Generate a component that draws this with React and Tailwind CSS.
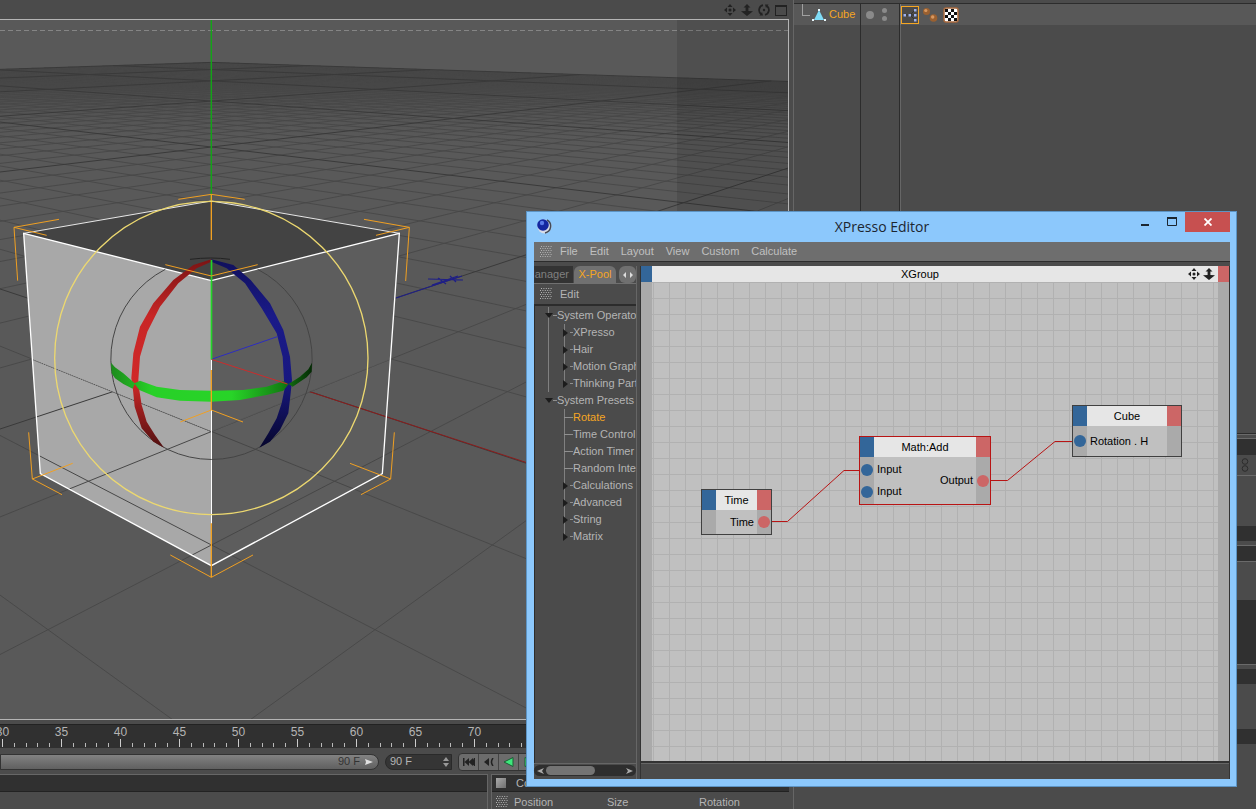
const MENUS = ['File', 'Edit', 'Layout', 'View', 'Custom', 'Calculate'];

const TREE = [
  { label: 'System Operators', items: [
    { label: 'XPresso', folder: true },
    { label: 'Hair', folder: true },
    { label: 'Motion Graphics', folder: true },
    { label: 'Thinking Particles', folder: true },
  ] },
  { label: 'System Presets', items: [
    { label: 'Rotate', active: true },
    { label: 'Time Control' },
    { label: 'Action Timer' },
    { label: 'Random Integer' },
    { label: 'Calculations', folder: true },
    { label: 'Advanced', folder: true },
    { label: 'String', folder: true },
    { label: 'Matrix', folder: true },
  ] },
];

const FRAMES = [30, 35, 40, 45, 50, 55, 60, 65, 70, 75, 80, 85, 90];

// floor plane projection, one unit = one grid cell
const CELL = 0.0902;
const HALF = 50;
const project = (x, z) => {
  const s = (x + z) * CELL;
  const w = 1 + (z - x) * CELL;
  return [(211.5 + (995 * s) / w).toFixed(1), (29.5 + 329.5 / w).toFixed(1)];
};

const gridPath = (major) => {
  let d = '';
  for (let k = -HALF; k <= HALF; k++) {
    if ((k % 10 === 0) !== major) continue;
    const nearX = Math.min(HALF, k + 10.3);
    const nearZ = Math.max(-HALF, k - 10.3);
    if (nearX > -HALF) d += `M${project(-HALF, k)}L${project(nearX, k)}`;
    if (nearZ < HALF) d += `M${project(k, nearZ)}L${project(k, HALF)}`;
  }
  return d;
};

const MINOR = gridPath(false);
const MAJOR = gridPath(true);

const MoveIcon = ({ className }) => (
  <svg viewBox="0 0 12 12" className={className} fill="currentColor">
    <path d="M6 0L8.5 3H3.5zM6 12L8.5 9H3.5zM0 6L3 3.5V8.5zM12 6L9 3.5V8.5z" />
    <circle cx="6" cy="6" r="1.5" />
  </svg>
);

const ZoomIcon = ({ className }) => (
  <svg viewBox="0 0 12 12" className={className} fill="currentColor">
    <path d="M6 0L9.5 3.5H7.4V7L12 7.2L6 12L0 7.2L4.6 7V3.5H2.5z" />
  </svg>
);

const OrbitIcon = ({ className }) => (
  <svg viewBox="0 0 12 12" className={className} fill="none" stroke="currentColor" strokeWidth="1.7">
    <path d="M5 1.2A5 5 0 0 0 3 10M7 10.800A5 5 0 0 0 9 2" />
    <path d="M1.500 11.500L5 11.500L4 8zM10.500 .5L7 .5L8 4z" fill="currentColor" stroke="none" />
    <circle cx="6" cy="6" r="1.2" fill="currentColor" stroke="none" />
  </svg>
);

const FrameIcon = ({ className }) => (
  <svg viewBox="0 0 12 12" className={className}>
    <rect x=".5" y="1.5" width="11" height="10" fill="none" stroke="currentColor" />
    <path d="M0 1H12V3H0z" fill="currentColor" />
  </svg>
);

const Grip = () => (
  <svg viewBox="0 0 12 12" className="h-3 w-3 flex-none">
    {[0, 1, 2, 3, 4, 5].map(row => (
      <path key={row} d={`M${row % 2 ? 0 : 1} ${row * 2 + 0.5}H12`} stroke="#b4b4b4" strokeDasharray="1 1.4" />
    ))}
  </svg>
);

function Viewport() {
  return (
    <svg viewBox="0 20 788 699" preserveAspectRatio="xMinYMin slice" className="block h-full w-full" role="img" aria-label="Perspective view">
      <defs>
        <clipPath id="front">
          <path d="M31 359L211.5 431.5L391 359L382 474L211.5 565.5L40 474z" />
        </clipPath>
        <linearGradient id="haze" x1="0" y1="62" x2="0" y2="150" gradientUnits="userSpaceOnUse">
          <stop offset="0" stopColor="#414141" />
          <stop offset=".2" stopColor="#454545" />
          <stop offset="1" stopColor="#595959" stopOpacity="0" />
        </linearGradient>
        <linearGradient id="redBand" x1="0" y1="240" x2="0" y2="803" gradientUnits="userSpaceOnUse">
          <stop offset="0" stopColor="#7c1414" />
          <stop offset=".3" stopColor="#c82626" />
          <stop offset=".65" stopColor="#d02828" />
          <stop offset="1" stopColor="#501010" />
        </linearGradient>
        <linearGradient id="blueBand" x1="0" y1="240" x2="0" y2="803" gradientUnits="userSpaceOnUse">
          <stop offset="0" stopColor="#10105c" />
          <stop offset=".3" stopColor="#1a1a88" />
          <stop offset=".65" stopColor="#181880" />
          <stop offset="1" stopColor="#06062c" />
        </linearGradient>
        <linearGradient id="greenBand" x1="333" y1="0" x2="936" y2="0" gradientUnits="userSpaceOnUse">
          <stop offset="0" stopColor="#1c8a1c" />
          <stop offset=".2" stopColor="#28d028" />
          <stop offset=".6" stopColor="#28d428" />
          <stop offset=".85" stopColor="#138013" />
          <stop offset="1" stopColor="#042a04" />
        </linearGradient>
      </defs>
      <rect y="20" width="788" height="699" fill="#595959" />

      {/* floor */}
      <path d="M211.500 62.500L788 82V150H0V70z" fill="url(#haze)" />
      <g fill="none">
        <path d={MINOR} stroke="#474747" strokeWidth=".9" />
        <path d={MAJOR} stroke="#3a3a3a" />
      </g>
      <path d="M0 30.500H788" stroke="#858585" strokeDasharray="5 3" />
      <path d="M210.600 20H212V201H210.600z" fill="#12a418" />
      <path d="M309 391.500L788 548" stroke="#8c1c1c" />
      <path d="M396 298L462 276M428 279L463 280M432 285L458 276M438 278L446 284M450 276L456 282" stroke="#1f1f86" strokeWidth="1.2" />

      {/* cube faces */}
      <g transform="translate(0 180) scale(.33333)">
        <path d="M71 160L634 63L1198 160L634 302z" fill="#434343" />
        <path d="M71 160L634 302V1157L121 881z" fill="#a8a8a8" />
        <path d="M1198 160L634 302V1157L1147 881z" fill="#5d5d5d" />
      </g>
      <g clipPath="url(#front)" fill="none">
        <path d={MINOR} stroke="#474747" />
        <path d={MAJOR} stroke="#3a3a3a" />
        <path d="M309 391.500L788 548" stroke="#8c1c1c" />
      </g>
      <path d="M31 359L211 431.500L391 359" fill="none" stroke="#555" strokeDasharray="1 1" />

      {/* edges, rotation gizmo and selection brackets */}
      <g transform="translate(0 180) scale(.33333)" fill="none" strokeWidth="3">
        <path d="M71 160L634 63L1198 160" stroke="#e8e8e8" />
        <path d="M71 160L634 302L1198 160L1147 881L634 1157L121 881z" stroke="#fff" strokeWidth="4" />
        <path d="M633 302H636V1157H633z" fill="#fff" />
        <path d="M496 268A302 302 0 1 0 773 268" stroke="#444" />
        <path d="M570 238Q634 230 690 238" stroke="#222" />
        <path
          fill="url(#redBand)"
          d="M634 238L580 255L520 300L460 370L420 440L400 520L394 595L398 620L404 680L425 745L460 785L492 803L465 765L440 725L425 675L417 625L415 600L420 530L442 455L480 380L535 310L590 265L634 245z"
        />
        <path
          fill="url(#blueBand)"
          d="M634 238L700 255L752 300L810 370L850 450L870 530L876 600L872 640L865 700L840 750L810 785L778 803L805 760L830 715L845 670L853 630L852 600L848 530L830 460L785 385L735 310L680 265L634 245z"
        />
        <path
          fill="url(#greenBand)"
          d="M333 548L345 562L370 580L404 610L420 602L470 620L540 630L634 632L730 630L800 620L850 604L866 612L900 590L925 568L936 548L935 575L920 592L900 605L878 620L866 612L850 632L800 645L720 660L634 665L540 662L470 652L418 630L404 612L398 626L370 612L345 595L335 580z"
        />
        <path d="M634 538L832 470" stroke="#2c2cc0" />
        <path d="M634 538L862 612" stroke="#cc2c2c" />
        <path d="M632 240H637V538H632z" fill="#22d428" />
        <path
          stroke="#f0a022"
          strokeWidth="4"
          d="M634 43V180M634 570V690M634 1030V1192"
        />
        <path
          stroke="#f0a022"
          d="M177 118L42 142L53 302M42 142L140 166M1092 118L1228 142L1217 303M1228 142L1128 166M535 58L634 43L734 58M496 254L634 288L773 254M541 726L634 690L729 726M86 757L97 897L186 944M97 897L218 850M1183 757L1172 897L1083 944M1172 897L1050 850M511 1125L634 1192L759 1125"
        />
        <circle cx="634" cy="534" r="470" stroke="#ecd870" strokeWidth="4" />
      </g>
      <rect x="677" y="20" width="111" height="699" fill="#000" opacity=".1" />
    </svg>
  );
}

function Timeline() {
  return (
    <div className="flex h-6 flex-none overflow-hidden border-t border-[#222] bg-[#303030]">
      <div className="-ml-[27px] flex flex-none">
        {FRAMES.map(frame => (
          <div key={frame} className="w-[59px] flex-none text-center text-xs leading-[14px]">
            <div>{frame}</div>
            <div className="flex h-2 items-end">
              {[-2, -1, 0, 1, 2].map(t => (
                <div key={t} className="flex flex-1 justify-center">
                  <span className={t === 0 ? 'h-2 w-px bg-[#ccc]' : 'h-1 w-px bg-[#bbb]'} />
                </div>
              ))}
            </div>
          </div>
        ))}
      </div>
    </div>
  );
}

function Transport() {
  return (
    <div className="flex h-[21px] flex-none items-center pb-1">
      <div className="flex h-4 w-[379px] flex-none items-center justify-end gap-1 rounded-r-full border border-[#333] bg-linear-to-b from-[#828282] to-[#606060] pr-1 text-[11px] text-[#333]">
        <span>90 F</span>
        <svg viewBox="0 0 10 10" className="h-2.5 w-2.5"><path d="M1 2L9 5L1 8L2 5z" fill="#e0e0e0" /></svg>
      </div>
      <label className="ml-1.5 flex h-4 w-[67px] flex-none items-center rounded-l-full border border-[#2a2a2a] bg-[#353535] pl-1">
        <input aria-label="End frame" defaultValue="90 F" className="w-0 flex-1 bg-transparent text-[11px] text-[#b4b4b4] outline-none" />
        <svg viewBox="0 0 6 10" className="mr-0.5 h-2.5 w-1.5"><path d="M3 0L6 4H0zM3 10L6 6H0z" fill="#999" /></svg>
      </label>
      <div className="ml-1.5 flex h-[18px] flex-none overflow-hidden rounded-l-sm border border-[#333] bg-[#6c6c6c] text-[#222]">
        <button aria-label="Go to start" className="flex w-5 items-center justify-center border-r border-[#444]">
          <svg viewBox="0 0 12 8" className="h-2 w-3"><path d="M0 0H1.500V8H0zM6 0V8L1.500 4zM10 0V8L5.500 4zM11 0H12V8H11L9 4z" fill="currentColor" /></svg>
        </button>
        <button aria-label="Previous key" className="flex w-5 items-center justify-center border-r border-[#444]">
          <svg viewBox="0 0 10 8" className="h-2 w-2.5"><path d="M5 0V8L0 4z" fill="currentColor" /><path d="M9 0Q6 4 9 8" fill="none" stroke="currentColor" strokeWidth="1.5" /></svg>
        </button>
        <button aria-label="Play backwards" className="flex w-5 items-center justify-center border-r border-[#444]">
          <svg viewBox="0 0 11 10" className="h-2.5 w-[11px]"><path d="M10 .5V9.500L1 5z" fill="#3ee87c" stroke="#1c5c34" /></svg>
        </button>
        <button aria-label="Play forwards" className="flex w-5 items-center justify-center">
          <svg viewBox="0 0 11 10" className="h-2.5 w-[11px]"><path d="M1 .5V9.500L10 5z" fill="#3ee87c" stroke="#1c5c34" /></svg>
        </button>
      </div>
    </div>
  );
}

function ObjectManager() {
  return (
    <div className="flex h-[434px] flex-none flex-col border-b border-[#2c2c2c]">
      <div className="h-1 flex-none border-b border-[#2c2c2c]" />
      <div className="flex h-[21px] flex-none bg-[#585858]">
        <div className="flex w-[67px] items-center border-r border-[#2c2c2c]">
          <span className="ml-2 h-3 w-2 flex-none self-start border-b border-l border-[#a0a0a0]" />
          <svg viewBox="0 0 14 12" className="ml-0.5 h-3 w-3.5 flex-none">
            <path d="M7 1L12 11H2z" fill="#7fdcf6" />
            <path d="M6 0H8V2H6zM0 10H2V12H0zM12 10H14V12H12z" fill="#e8f6fa" />
          </svg>
          <span className="ml-[3px] text-[11px] text-[#f5a623]">Cube</span>
        </div>
        <div className="flex w-[39px] items-center border-r border-[#2c2c2c] pl-[5px]">
          <span className="h-2 w-2 rounded-full bg-[#8a8a8a]" />
          <div className="ml-2 flex flex-col gap-[3px]">
            <span className="h-[5px] w-[5px] rounded-full bg-[#8a8a8a]" />
            <span className="h-[5px] w-[5px] rounded-full bg-[#8a8a8a]" />
          </div>
        </div>
        <div className="flex flex-1 items-center gap-[3px] border-l border-[#777]">
          <svg viewBox="0 0 18 18" className="h-[18px] w-[18px]">
            <rect x=".5" y=".5" width="17" height="17" fill="#4c4a48" stroke="#f5a623" />
            <path d="M5 9H14M9 9L14 4M9 9L14 14" stroke="#333" />
            <path d="M2.500 8H5V10.500H2.500zM7.500 8H10V10.500H7.500zM13 8H15.500V10.500H13zM13 3H15.500V5.500H13zM13 13H15.500V15.500H13z" fill="#9cb0ee" />
          </svg>
          <svg viewBox="0 0 16 16" className="h-4 w-4">
            <circle cx="4.5" cy="4.5" r="3.5" fill="#9a6030" /><circle cx="11.5" cy="11" r="3.8" fill="#9a6030" />
            <circle cx="3.8" cy="3.5" r="1.6" fill="#d89860" /><circle cx="10.7" cy="10" r="1.7" fill="#d89860" />
          </svg>
          <svg viewBox="0 0 16 16" className="ml-0.5 h-4 w-4">
            <rect x="1" y="1" width="14" height="14" rx="2" fill="#fff" stroke="#a8683c" strokeWidth="1.5" />
            <path d="M2 2H5V5H2zM8 2H11V5H8zM5 5H8V8H5zM11 5H14V8H11zM2 8H5V11H2zM8 8H11V11H8zM5 11H8V14H5zM11 11H14V14H11z" fill="#111" />
          </svg>
        </div>
      </div>
      <div className="flex flex-1">
        <div className="w-[67px] border-r border-[#2c2c2c]" />
        <div className="w-[39px] border-r border-[#2c2c2c]" />
        <div className="flex-1 border-l border-[#666]" />
      </div>
    </div>
  );
}

function AttributePanels() {
  return (
    <div className="flex flex-1 flex-col">
      <div className="h-1 border-t border-[#6a6a6a]" />
      <div className="h-[17px] border-t border-[#6a6a6a] bg-[#303030]" />
      <div className="flex h-[21px] items-center justify-end border-b border-[#6a6a6a] pr-[7px]">
        <svg viewBox="0 0 8 14" className="h-3.5 w-2" fill="none" stroke="#2c2c2c">
          <circle cx="4" cy="3.5" r="2.8" /><circle cx="4" cy="10.5" r="2.8" />
        </svg>
      </div>
      <div className="h-[50px]" />
      <div className="h-[15px] bg-[#303030]" />
      <div className="h-1" />
      <div className="h-4 border-t border-[#6a6a6a] bg-[#303030]" />
      <div className="h-[39px] border-t border-[#6a6a6a]" />
      <div className="h-16 bg-[#303030]" />
      <div className="h-[5px] border-t border-[#6a6a6a]" />
      <div className="h-[15px] bg-[#303030]" />
      <div className="h-[45px]" />
      <div className="h-[15px] bg-[#303030]" />
    </div>
  );
}

function Tree() {
  return (
    <ul className="flex-1 overflow-hidden pt-px text-[11px] leading-[17px] whitespace-nowrap">
      {TREE.map((group, g) => (
        <li key={group.label} className="relative">
          {g === 0 && <span className="absolute top-0 left-[13px] h-full w-px bg-[#808080]" />}
          <div className="flex items-center pl-2.5">
            <svg viewBox="0 0 8 5" className="relative h-[5px] w-2 flex-none"><path d="M0 0H8L4 5z" fill="#1c1c1c" /></svg>
            <span className="h-px w-1 flex-none bg-[#909090]" />
            {group.label}
          </div>
          <ul className="relative pl-[27px]">
            <span className="absolute top-0 bottom-2 left-[29px] w-px bg-[#808080]" />
            {group.items.map(item => (
              <li key={item.label} className={item.active ? 'relative flex items-center text-[#f5a623]' : 'relative flex items-center'}>
                {item.folder ? (
                  <>
                    <svg viewBox="0 0 5 8" className="ml-px h-2 w-[5px] flex-none"><path d="M0 0L5 4L0 8z" fill="#1c1c1c" /></svg>
                    <span className="ml-0.5 h-px w-[3px] flex-none bg-[#909090]" />
                  </>
                ) : (
                  <span className="ml-0.5 h-px w-[9px] flex-none bg-[#909090]" />
                )}
                {item.label}
              </li>
            ))}
          </ul>
        </li>
      ))}
    </ul>
  );
}

function Node({ title, className, inputs = [], outputs = [], selected }) {
  return (
    <div className={`absolute flex flex-col border bg-[#c0c0c0] text-[11px] text-black ${selected ? 'border-[#b81414]' : 'border-[#404040]'} ${className}`}>
      <div className="flex h-5 flex-none">
        <span className="w-3.5 bg-[#336699]" />
        <span className="flex-1 bg-[#e6e6e6] text-center leading-5">{title}</span>
        <span className="w-3.5 bg-[#cc6666]" />
      </div>
      <div className="flex flex-1 border-x-[14px] border-[#aaa]">
        <div className="-ml-[13px] flex flex-1 flex-col justify-center">
          {inputs.map((name, i) => (
            <div key={i} className="flex h-[22px] items-center gap-1 whitespace-nowrap">
              <span className="h-3 w-3 flex-none rounded-full bg-[#336699]" />
              {name}
            </div>
          ))}
        </div>
        <div className="-mr-[13px] flex flex-col justify-center">
          {outputs.map(name => (
            <div key={name} className="flex h-[22px] items-center gap-1">
              {name}
              <span className="h-3 w-3 flex-none rounded-full bg-[#cc6666]" />
            </div>
          ))}
        </div>
      </div>
    </div>
  );
}

function NodeCanvas() {
  return (
    <div className="flex min-w-0 flex-1 flex-col border-l border-[#333]">
      <div className="flex h-4 flex-none bg-[#e6e6e6] text-[#222]">
        <span className="w-[11px] bg-[#336699]" />
        <span className="flex-1 text-center text-[11px] leading-4 text-black">XGroup</span>
        <button aria-label="Pan" className="flex w-[15px] items-center"><MoveIcon className="h-3 w-3" /></button>
        <button aria-label="Zoom" className="flex w-[15px] items-center"><ZoomIcon className="h-3 w-3" /></button>
        <span className="w-[11px] bg-[#cc6666]" />
      </div>
      <div className="relative flex-1 border-b-2 border-[#333] bg-[#c0c0c0]">
        <div className="h-full border-x-[11px] border-[#aaa] bg-[linear-gradient(to_right,#b1b1b1_1px,transparent_1px),linear-gradient(to_bottom,#b1b1b1_1px,transparent_1px)] bg-[size:16px_16px] bg-[position:1px_0px]" />
        <svg className="absolute top-0 left-0 h-full w-full" fill="none" stroke="#b81414">
          <path d="M131 239.500H146.500L203 188.500H218" />
          <path d="M350 198.500H366.500L414 159.500H431" />
        </svg>
        <Node title="Time" className="top-[207px] left-[60px] h-[46px] w-[71px]" outputs={['Time']} />
        <Node title="Math:Add" className="top-[154px] left-[218px] h-[69px] w-[132px]" inputs={['Input', 'Input']} outputs={['Output']} selected />
        <Node title="Cube" className="top-[123px] left-[431px] h-[52px] w-[110px]" inputs={['Rotation . H']} />
      </div>
      <div className="h-4 flex-none border-t border-[#666]" />
    </div>
  );
}

function XPressoWindow() {
  return (
    <section className="absolute top-[211px] left-[526px] flex h-[576px] w-[711px] flex-col border border-[#5d94c4] bg-[#8cc8fc] pr-1.5 pb-[7px] pl-[7px]">
      <header className="relative flex h-[30px] flex-none items-center justify-center">
        <svg viewBox="0 0 16 16" className="absolute top-1.5 left-0.5 h-4 w-4">
          <circle cx="8.5" cy="8.5" r="7" fill="#d8dce8" />
          <path d="M11 2A7 7 0 0 1 9 15" fill="none" stroke="#444a58" strokeWidth="1.5" />
          <circle cx="7" cy="7" r="5.8" fill="#1426a0" />
          <circle cx="6" cy="5" r="2.2" fill="#5878e8" />
        </svg>
        <h1 className="font-['Open_Sans',sans-serif] text-sm text-[#1c2630]">XPresso Editor</h1>
        <div className="absolute top-0 right-0 flex h-5">
          <button aria-label="Minimize" className="flex w-[27px] items-center justify-center">
            <svg viewBox="0 0 10 10" className="h-2.5 w-2.5"><path d="M1 7H9V9H1z" fill="#1c2630" /></svg>
          </button>
          <button aria-label="Maximize" className="flex w-[27px] items-center justify-center">
            <svg viewBox="0 0 10 10" className="h-2.5 w-2.5"><path d="M.5 1.500H9.500V8.500H.5z" fill="none" stroke="#1c2630" /><path d="M0 0H10V2H0z" fill="#1c2630" /></svg>
          </button>
          <button aria-label="Close" className="flex w-[45px] items-center justify-center bg-[#c75050]">
            <svg viewBox="0 0 8 8" className="h-2 w-2"><path d="M.5 .5L7.500 7.500M7.500 .5L.5 7.500" stroke="#fff" strokeWidth="1.8" /></svg>
          </button>
        </div>
      </header>

      <div className="flex min-h-0 flex-1 flex-col bg-[#4b4b4b] text-[#b4b4b4]">
        <nav className="flex h-5 flex-none items-center gap-3 border-b border-[#2c2c2c] bg-[#6e6e6e] pl-1.5 text-[11px] text-[#c0c0c0]">
          <span className="-mr-1 flex"><Grip /></span>
          {MENUS.map(name => <button key={name}>{name}</button>)}
        </nav>
        <div className="flex min-h-0 flex-1 pt-1">
          <aside className="flex w-[103px] flex-none flex-col border-r border-[#666]">
            <div className="flex h-[17px] flex-none text-[11px]" role="tablist">
              <button role="tab" className="flex w-[39px] items-center justify-end overflow-hidden bg-[#333] pr-1 text-[#808080]">Manager</button>
              <button role="tab" aria-selected="true" className="ml-px w-[42px] rounded-t-md bg-[#707070] text-[#f5a623]">X-Pool</button>
              <button aria-label="Scroll tabs" className="ml-[3px] flex w-[17px] items-center justify-center rounded-md bg-[#707070]">
                <svg viewBox="0 0 12 8" className="h-2 w-3"><path d="M4 1V7L1 4zM8 1V7L11 4z" fill="#ddd" /></svg>
              </button>
            </div>
            <div className="flex h-[22px] flex-none items-center gap-2 border-t border-b border-t-[#707070] border-b-[#2c2c2c] pl-1.5 text-[11px]">
              <Grip />
              <button>Edit</button>
            </div>
            <div className="flex min-h-0 flex-1 flex-col border-t border-l border-[#2c2c2c]">
              <Tree />
            </div>
            <div className="flex h-4 flex-none items-start border-t border-[#666] pt-px">
              <div className="flex h-[11px] flex-1 items-center rounded-full bg-[#2e2e2e] px-0.5">
                <button aria-label="Scroll left" className="flex"><svg viewBox="0 0 8 8" className="h-2 w-2"><path d="M8 1L1 4L8 7L6 4z" fill="#aaa" /></svg></button>
                <span className="ml-0.5 h-[9px] w-[49px] rounded-full bg-[#747474]" />
                <button aria-label="Scroll right" className="ml-auto flex"><svg viewBox="0 0 8 8" className="h-2 w-2"><path d="M0 1L7 4L0 7L2 4z" fill="#aaa" /></svg></button>
              </div>
            </div>
          </aside>
          <div className="ml-[3px] flex min-w-0 flex-1 border-r border-[#333]">
            <NodeCanvas />
          </div>
        </div>
      </div>
    </section>
  );
}

export default function App() {
  return (
    <div className="relative flex h-screen overflow-hidden bg-[#4b4b4b] font-['Liberation_Sans',Arial,sans-serif] text-[#b4b4b4]">
      <main className="flex min-w-0 flex-1 flex-col">
        <div className="flex h-[19px] flex-none items-center justify-end gap-[5px] pr-0.5 text-[#222]">
          <button aria-label="Pan view"><MoveIcon className="h-3 w-3" /></button>
          <button aria-label="Zoom view"><ZoomIcon className="h-3 w-3" /></button>
          <button aria-label="Orbit view"><OrbitIcon className="h-3 w-3" /></button>
          <button aria-label="Toggle view"><FrameIcon className="h-3 w-3" /></button>
        </div>
        <div className="min-h-0 flex-1 border-y border-r border-[#b4b4b4]">
          <Viewport />
        </div>
        <div className="h-1 flex-none" />
        <Timeline />
        <div className="h-[5px] flex-none" />
        <Transport />
        <div className="flex h-[35px] flex-none gap-[3px]">
          <div className="w-[488px] flex-none border-t border-r border-[#666]">
            <div className="h-[17px] border-b border-[#222] bg-[#303030]" />
          </div>
          <div className="min-w-0 flex-1 border-t border-l border-[#666]">
            <div className="flex h-[17px] items-center gap-2.5 border-b border-[#222] bg-[#303030] pl-1 text-[11px]">
              <span className="h-2.5 w-2.5 bg-linear-to-br from-[#aaa] to-[#707070]" />
              Coordinates
            </div>
            <div className="flex h-5 items-center pl-1 text-[11px]">
              <Grip />
              <span className="ml-1.5 w-[93px]">Position</span>
              <span className="w-[92px]">Size</span>
              <span>Rotation</span>
            </div>
          </div>
        </div>
      </main>
      <aside className="ml-1 flex w-[463px] flex-none flex-col border-l border-[#666]">
        <ObjectManager />
        <AttributePanels />
      </aside>
      <XPressoWindow />
    </div>
  );
}
